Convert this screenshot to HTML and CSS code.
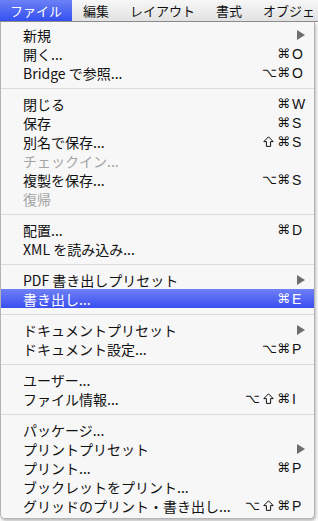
FILE: index.html
```html
<!doctype html>
<html lang="ja">
<head>
    <meta charset="UTF-8">
    <title>ファイル メニュー</title>
    <link rel="stylesheet" href="styles.css">
</head>
<body>
<div class="menubar">
    <span class="bar-item active">ファイル</span>
    <span class="bar-item">編集</span>
    <span class="bar-item">レイアウト</span>
    <span class="bar-item">書式</span>
    <span class="bar-item">オブジェ</span>
</div>

<div class="menu">
    <div class="item"><span class="label">新規</span><span class="sub"></span></div>
    <div class="item"><span class="label">開く...</span><span class="mods">⌘</span><span class="key">O</span></div>
    <div class="item"><span class="label">Bridge で参照...</span><span class="mods">⌥⌘</span><span class="key">O</span></div>
    <div class="sep"></div>
    <div class="item"><span class="label">閉じる</span><span class="mods">⌘</span><span class="key">W</span></div>
    <div class="item"><span class="label">保存</span><span class="mods">⌘</span><span class="key">S</span></div>
    <div class="item"><span class="label">別名で保存...</span><span class="mods"><svg class="shift" viewBox="0 0 11 11"><path d="M5.5 0.8 L10.2 5.6 H7.6 V10.4 H3.4 V5.6 H0.8 Z"/></svg>⌘</span><span class="key">S</span></div>
    <div class="item off"><span class="label">チェックイン...</span></div>
    <div class="item"><span class="label">複製を保存...</span><span class="mods">⌥⌘</span><span class="key">S</span></div>
    <div class="item off"><span class="label">復帰</span></div>
    <div class="sep"></div>
    <div class="item"><span class="label">配置...</span><span class="mods">⌘</span><span class="key">D</span></div>
    <div class="item"><span class="label">XML を読み込み...</span></div>
    <div class="sep"></div>
    <div class="item"><span class="label">PDF 書き出しプリセット</span><span class="sub"></span></div>
    <div class="item hi"><span class="label">書き出し...</span><span class="mods">⌘</span><span class="key">E</span></div>
    <div class="sep"></div>
    <div class="item"><span class="label">ドキュメントプリセット</span><span class="sub"></span></div>
    <div class="item"><span class="label">ドキュメント設定...</span><span class="mods">⌥⌘</span><span class="key">P</span></div>
    <div class="sep"></div>
    <div class="item"><span class="label">ユーザー...</span></div>
    <div class="item"><span class="label">ファイル情報...</span><span class="mods">⌥<svg class="shift" viewBox="0 0 11 11"><path d="M5.5 0.8 L10.2 5.6 H7.6 V10.4 H3.4 V5.6 H0.8 Z"/></svg>⌘</span><span class="key">I</span></div>
    <div class="sep"></div>
    <div class="item"><span class="label">パッケージ...</span></div>
    <div class="item"><span class="label">プリントプリセット</span><span class="sub"></span></div>
    <div class="item"><span class="label">プリント...</span><span class="mods">⌘</span><span class="key">P</span></div>
    <div class="item"><span class="label">ブックレットをプリント...</span></div>
    <div class="item"><span class="label">グリッドのプリント・書き出し...</span><span class="mods">⌥<svg class="shift" viewBox="0 0 11 11"><path d="M5.5 0.8 L10.2 5.6 H7.6 V10.4 H3.4 V5.6 H0.8 Z"/></svg>⌘</span><span class="key">P</span></div>
</div>
</body>
</html>
```

FILE: styles.css
```css
html, body {
    margin: 0;
    padding: 0;
}

body {
    width: 318px;
    height: 521px;
    overflow: hidden;
    background: #fbfbfb;
    font-family: "Noto Sans CJK JP", "DejaVu Sans", sans-serif;
    color: #111;
}

/* メニューバー */
.menubar {
    height: 21px;
    display: flex;
    white-space: nowrap;
    overflow: hidden;
    background: linear-gradient(#f7f7f7, #e2e2e2);
    border-bottom: 1px solid #8c8c8c;
    font-size: 13px;
    line-height: 21px;
}

.bar-item {
    padding: 0 10px 0 11px;
}

.bar-item:first-child {
    padding-left: 10px;
}

.bar-item.active {
    color: white;
    background: linear-gradient(#6c80f6, #3550f0);
}

/* プルダウン */
.menu {
    width: 313px;
    padding: 3px 0 3px;
    background: #f7f7f7;
    border: 1px solid #b4b4b4;
    border-top: 0;
    border-radius: 0 0 5px 5px;
    box-shadow: 1px 2px 3px rgba(0, 0, 0, 0.25);
    font-size: 14px;
}

.item {
    height: 19px;
    display: flex;
    align-items: center;
    padding: 0 8px 0 22px;
    white-space: nowrap;
}

.label {
    flex: 1;
}

.off {
    color: #a4a4a4;
}

.hi {
    color: white;
    background: linear-gradient(#6f80f6, #3a4ef0);
}

.mods {
    display: flex;
    align-items: center;
    gap: 2px;
    font-family: "DejaVu Sans", sans-serif;
    font-size: 13px;
}

.shift {
    width: 11px;
    height: 11px;
    margin: 0 1px;
}

.shift path {
    fill: none;
    stroke: currentColor;
    stroke-width: 1;
    stroke-linejoin: miter;
}

.key {
    width: 14px;
    padding-left: 2px;
    font-family: "Liberation Sans", sans-serif;
    font-size: 14px;
}

.sub {
    width: 0;
    height: 0;
    margin-right: 1px;
    border-top: 5px solid transparent;
    border-bottom: 5px solid transparent;
    border-left: 8px solid #6e6e6e;
}

.sep {
    height: 1px;
    margin: 6px 0 5px;
    background: #dadada;
}
```
